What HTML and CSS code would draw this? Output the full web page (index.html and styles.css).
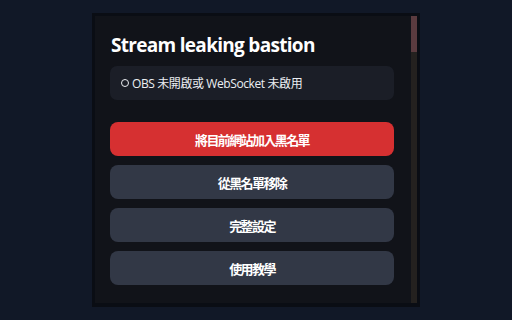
FILE: index.html
```html
<!DOCTYPE html>
<html lang="zh-Hant">
<head>
<meta charset="utf-8">
<link rel="stylesheet" href="styles.css">
</head>
<body>
<div class="frame">
  <div class="panel">
    <div class="content">
      <h1 class="title">Stream leaking bastion</h1>
      <div class="status"><span class="dot"></span><span class="status-text">OBS 未開啟或 WebSocket 未啟用</span></div>
      <div class="actions">
        <button class="btn btn-danger">將目前網站加入黑名單</button>
        <button class="btn">從黑名單移除</button>
        <button class="btn">完整設定</button>
        <button class="btn">使用教學</button>
      </div>
    </div>
    <div class="scrollbar"><div class="thumb"></div></div>
  </div>
</div>
</body>
</html>
```
FILE: styles.css
```css
html, body {
  margin: 0;
  padding: 0;
}
body {
  background: #111827;
  width: 512px;
  height: 320px;
  overflow: hidden;
  padding: 13px 0 0 92px;
  box-sizing: border-box;
  font-family: "Open Sans", "Noto Sans CJK TC", sans-serif;
}
.frame {
  width: 328px;
  height: 294px;
  box-sizing: border-box;
  background: #0a0d14;
  padding: 3px 3px 4px 3px;
}
.panel {
  display: flex;
  height: 100%;
  background: #111319;
}
.content {
  flex: 1;
  padding: 0 17px 0 15px;
}
.title {
  margin: 18px 0 0 1px;
  font-size: 19px;
  line-height: 22px;
  font-weight: 700;
  letter-spacing: -0.7px;
  color: #ffffff;
}
.status {
  margin-top: 10px;
  height: 34px;
  display: flex;
  align-items: center;
  gap: 3px;
  padding: 0 11px;
  background: #1b1e27;
  border-radius: 7px;
  color: #eceef2;
  font-size: 12px;
  letter-spacing: -0.4px;
}
.dot {
  width: 8px;
  height: 8px;
  box-sizing: border-box;
  border: 1.5px solid #eceef2;
  border-radius: 50%;
  flex: none;
}
.actions {
  margin-top: 22px;
  display: flex;
  flex-direction: column;
  gap: 9px;
}
.btn {
  height: 34px;
  border: 0;
  border-radius: 8px;
  background: #323846;
  color: #ffffff;
  font-family: "Open Sans", "Noto Sans CJK TC", sans-serif;
  font-size: 13px;
  letter-spacing: -1.6px;
  font-weight: 700;
  padding: 0;
}
.btn-danger {
  background: #d63031;
}
.scrollbar {
  width: 6px;
  background: #24211f;
  display: flex;
  flex-direction: column;
}
.thumb {
  height: 36px;
  background: #5b3b3f;
}
```
